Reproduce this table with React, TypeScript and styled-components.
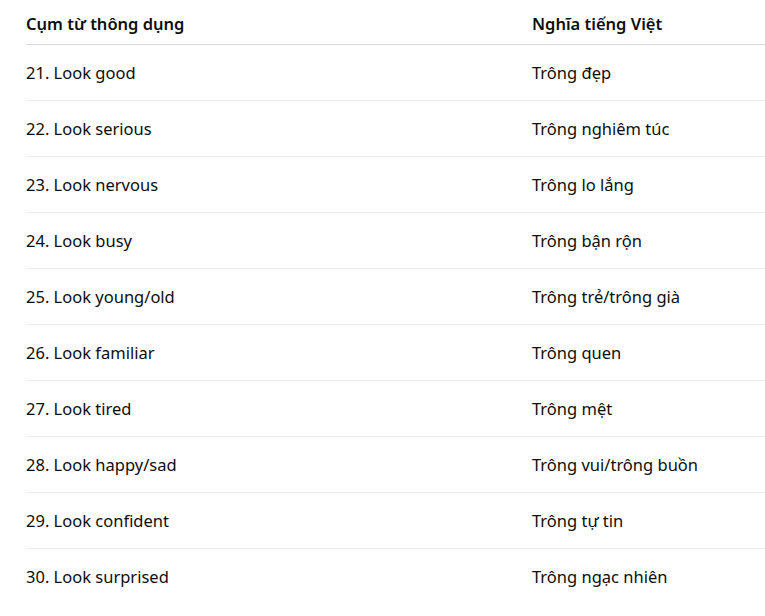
import React from "react";
import styled, { createGlobalStyle } from "styled-components";

const Global = createGlobalStyle`
  html, body { margin: 0; padding: 0; background: #ffffff; }
  body { font-family: "Noto Sans", "Open Sans", sans-serif; color: #0d0d0d; }
`;

const Page = styled.div`
  padding: 0 0 0 26px;
  width: 765px;
  box-sizing: border-box;
  overflow: hidden;
`;

const Table = styled.div`
  display: grid;
  grid-template-columns: 506px 1fr;
  width: 739px;
`;

const HeadCell = styled.div`
  font-size: 16.5px;
  line-height: 24px;
  font-weight: 600;
  padding: 12px 0 8px;
  border-bottom: 1px solid #d9d9d9;
`;

const Cell = styled.div<{ $last?: boolean }>`
  font-size: 16.5px;
  line-height: 24px;
  font-weight: 400;
  padding: 16px 0 15px;
  border-bottom: 1px solid ${(p) => (p.$last ? "transparent" : "#ececec")};
`;

const rows: [string, string][] = [
  ["21. Look good", "Trông đẹp"],
  ["22. Look serious", "Trông nghiêm túc"],
  ["23. Look nervous", "Trông lo lắng"],
  ["24. Look busy", "Trông bận rộn"],
  ["25. Look young/old", "Trông trẻ/trông già"],
  ["26. Look familiar", "Trông quen"],
  ["27. Look tired", "Trông mệt"],
  ["28. Look happy/sad", "Trông vui/trông buồn"],
  ["29. Look confident", "Trông tự tin"],
  ["30. Look surprised", "Trông ngạc nhiên"],
];

export default function App() {
  return (
    <>
      <Global />
      <Page>
        <Table>
          <HeadCell>Cụm từ thông dụng</HeadCell>
          <HeadCell>Nghĩa tiếng Việt</HeadCell>
          {rows.map(([a, b], i) => (
            <React.Fragment key={a}>
              <Cell $last={i === rows.length - 1}>{a}</Cell>
              <Cell $last={i === rows.length - 1}>{b}</Cell>
            </React.Fragment>
          ))}
        </Table>
      </Page>
    </>
  );
}
